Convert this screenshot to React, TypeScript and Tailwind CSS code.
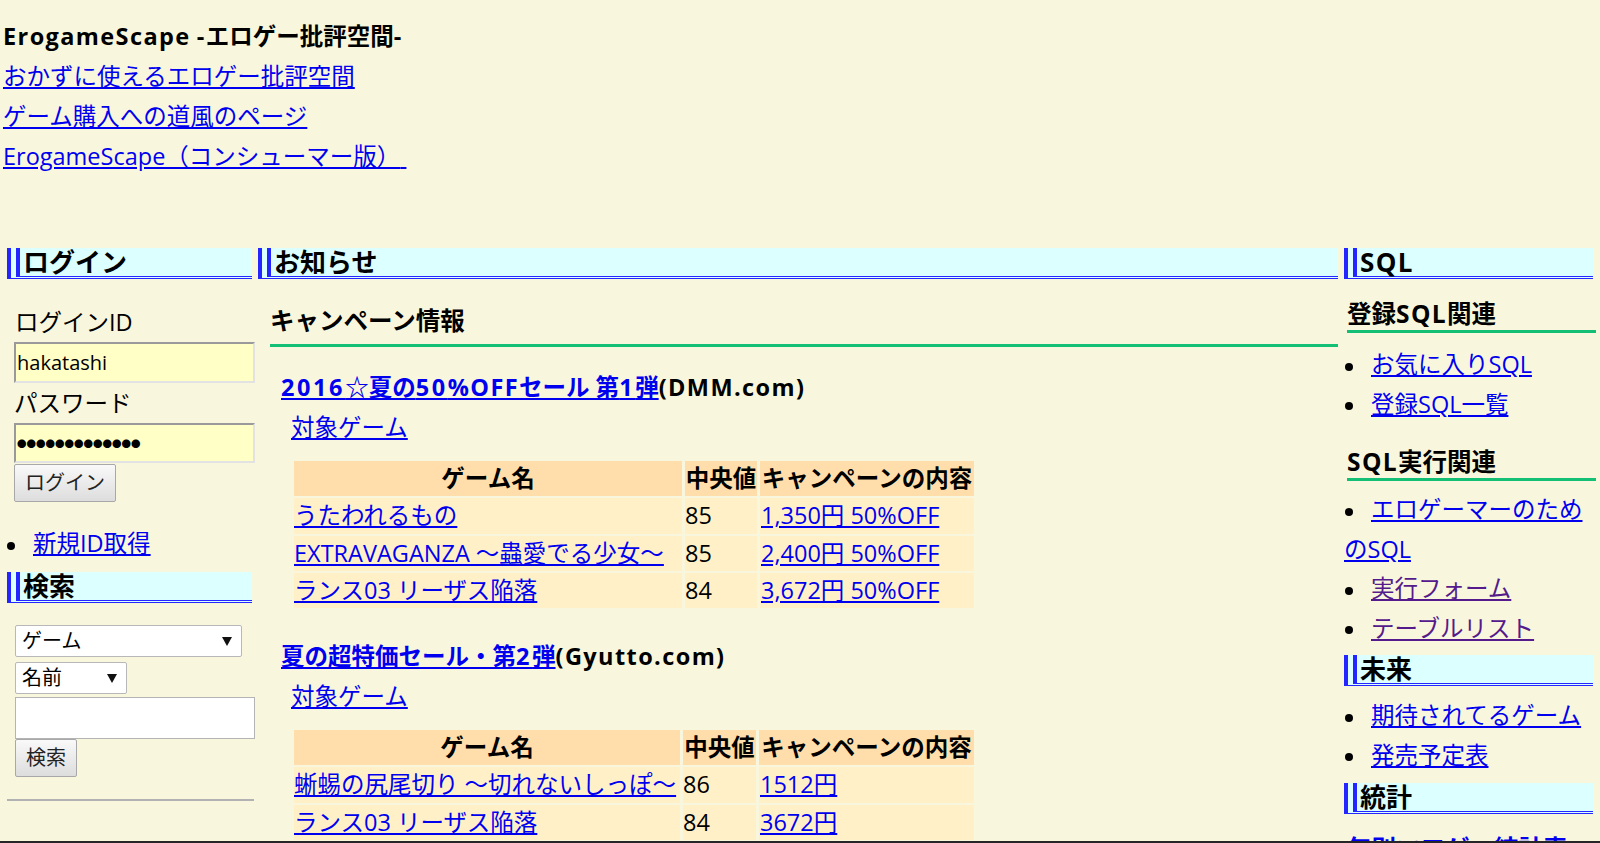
import React from "react";

type Row = { name: string; score: string; deal: string };

interface Campaign {
  title: string;
  shop: string;
  rows: Row[];
  widths: [string, string, string];
}

const campaigns: Campaign[] = [
  {
    title: "2016☆夏の50%OFFセール 第1弾",
    shop: "(DMM.com)",
    rows: [
      { name: "うたわれるもの", score: "85", deal: "1,350円 50%OFF" },
      { name: "EXTRAVAGANZA ～蟲愛でる少女～", score: "85", deal: "2,400円 50%OFF" },
      { name: "ランス03 リーザス陥落", score: "84", deal: "3,672円 50%OFF" },
    ],
    widths: ["w-[388px]", "w-[72px]", "w-[214px]"],
  },
  {
    title: "夏の超特価セール・第2弾",
    shop: "(Gyutto.com)",
    rows: [
      { name: "蜥蜴の尻尾切り ～切れないしっぽ～", score: "86", deal: "1512円" },
      { name: "ランス03 リーザス陥落", score: "84", deal: "3672円" },
    ],
    widths: ["w-[386px]", "w-[73px]", "w-[215px]"],
  },
];

const link = "text-[#0000ee] underline";
const visited = "text-[#551a8b] underline";

// bold latin in the original font runs wider than Open Sans, so space those runs out a bit
const Wide = ({ text }: { text: string }) => (
  <>
    {text.split(/([0-9]+|[!-\/:-~]+)/).map((part, i) =>
      i % 2 ? (
        <span key={i} className={/^[0-9]/.test(part) ? "tracking-[2.6px]" : "tracking-[1.4px]"}>
          {part}
        </span>
      ) : (
        part
      )
    )}
  </>
);

// section heading with the blue double bars
const Heading = ({ children, className = "" }: { children: React.ReactNode; className?: string }) => (
  <h2
    className={`h-[31px] bg-[#dcffff] border-l-[13px] border-b-[3px] border-double border-[#2525ff] pl-[3px] text-[26px] font-bold leading-[28px] ${className}`}
  >
    {children}
  </h2>
);

const Dot = ({ className = "" }: { className?: string }) => (
  <span className={`inline-block w-[8px] h-[8px] rounded-full bg-black align-middle mr-[18px] ${className}`} />
);

const Arrow = () => (
  <svg width="10" height="9" viewBox="0 0 10 9">
    <polygon points="0,0 10,0 5,9" fill="#111" />
  </svg>
);

const SubHeading = ({ children, className = "" }: { children: React.ReactNode; className?: string }) => (
  <h3 className={`text-[24.5px] font-bold border-b-[3px] border-[#12bf75] ${className}`}>{children}</h3>
);

const CampaignBlock = ({ c, className = "" }: { c: Campaign; className?: string }) => (
  <div className={`ml-[23px] ${className}`}>
    <div className="font-bold leading-[40px] whitespace-nowrap">
      <a href="#" className={link}>
        <Wide text={c.title} />
      </a>
      <Wide text={c.shop} />
    </div>
    <div className="ml-[10px] leading-[40px]">
      <a href="#" className={link}>
        対象ゲーム
      </a>
    </div>
    <table className="mt-[12px] ml-[10px] border-separate border-spacing-x-[3px] border-spacing-y-[2px] whitespace-nowrap">
      <thead>
        <tr>
          <th className={`${c.widths[0]} h-[35px] p-0 bg-[#ffdeab] font-bold text-center`}>ゲーム名</th>
          <th className={`${c.widths[1]} h-[35px] p-0 bg-[#ffdeab] font-bold text-center`}>中央値</th>
          <th className={`${c.widths[2]} h-[35px] p-0 bg-[#ffdeab] font-bold text-center`}>キャンペーンの内容</th>
        </tr>
      </thead>
      <tbody>
        {c.rows.map((r) => (
          <tr key={r.name}>
            <td className="h-[35px] p-0 bg-[#fff0c8]">
              <a href="#" className={link}>
                {r.name}
              </a>
            </td>
            <td className="h-[35px] p-0 bg-[#fff0c8]">{r.score}</td>
            <td className="h-[35px] p-0 pl-[1px] bg-[#fff0c8]">
              <a href="#" className={link}>
                {r.deal}
              </a>
            </td>
          </tr>
        ))}
      </tbody>
    </table>
  </div>
);

export default function App() {
  return (
    <div className="h-[843px] flex flex-col bg-[#f8f7dd] text-black text-[23.5px] font-['Open_Sans','Noto_Sans_CJK_JP',sans-serif]">
      <div className="flex-1 min-h-0 overflow-hidden">
        {/* top links */}
        <div className="pt-[16px] pl-[3px] leading-[40px]">
          <div className="font-bold">
            <Wide text="ErogameScape -エロゲー批評空間-" />
          </div>
          <div>
            <a href="#" className={link}>
              おかずに使えるエロゲー批評空間
            </a>
          </div>
          <div>
            <a href="#" className={link}>
              ゲーム購入への道風のページ
            </a>
          </div>
          <div>
            <a href="#" className={link}>
              ErogameScape（コンシューマー版）{"\u00a0"}
            </a>
          </div>
        </div>

        <div className="mt-[72px] flex items-start gap-[6px] px-[7px]">
          {/* left column */}
          <div className="w-[245px] shrink-0">
            <Heading>ログイン</Heading>
            <div className="mt-[23px] pl-[7px]">
              <div className="leading-[40px] pl-[1px]">ログインID</div>
              <input
                readOnly
                defaultValue="hakatashi"
                className="block w-[241px] h-[41px] bg-[#ffffc6] border-2 border-t-[#9a9a9a] border-l-[#9a9a9a] border-r-[#e2e2e2] border-b-[#e2e2e2] px-[1px] text-[20px] outline-none"
              />
              <div className="leading-[40px]">パスワード</div>
              <input
                readOnly
                defaultValue="●●●●●●●●●●●●●"
                className="block w-[241px] h-[40px] bg-[#ffffc6] border-2 border-t-[#9a9a9a] border-l-[#9a9a9a] border-r-[#e2e2e2] border-b-[#e2e2e2] px-[1px] text-[9.5px] outline-none"
              />
              <button className="block mt-[1px] w-[102px] h-[38px] bg-linear-to-b from-[#f9f9f9] to-[#dddddd] border border-[#a8a8a8] rounded-[2px] text-[20px] text-[#222]">
                ログイン
              </button>
            </div>
            <ul className="mt-[21px] leading-[40px]">
              <li>
                <Dot />
                <a href="#" className={link}>
                  新規ID取得
                </a>
              </li>
            </ul>
            <Heading className="mt-[9px]">検索</Heading>
            <div className="mt-[22px] pl-[8px] text-[20px]">
              <div className="flex items-center justify-between w-[227px] h-[32px] bg-white border border-[#b8b8b8] rounded-[2px] pl-[6px] pr-[9px]">
                <span>ゲーム</span>
                <Arrow />
              </div>
              <div className="mt-[5px] flex items-center justify-between w-[112px] h-[32px] bg-white border border-[#b8b8b8] rounded-[2px] pl-[6px] pr-[9px]">
                <span>名前</span>
                <Arrow />
              </div>
              <input
                readOnly
                className="block mt-[3px] w-[240px] h-[42px] bg-white border border-[#b4b4b4] outline-none"
              />
              <button className="block w-[62px] h-[38px] bg-linear-to-b from-[#f9f9f9] to-[#dddddd] border border-[#a8a8a8] rounded-[2px] text-[20px] text-[#222]">
                検索
              </button>
            </div>
            <hr className="mt-[22px] w-[247px] border-0 border-t-2 border-[#b2b2b2]" />
          </div>

          {/* middle column */}
          <div className="flex-1 min-w-0">
            <Heading>お知らせ</Heading>
            <SubHeading className="mt-[22px] ml-[12px] leading-[40px] pb-[3px]">キャンペーン情報</SubHeading>
            <CampaignBlock c={campaigns[0]} className="mt-[20px]" />
            <CampaignBlock c={campaigns[1]} className="mt-[26px]" />
          </div>

          {/* right column */}
          <div className="w-[249px] shrink-0 leading-[39.5px]">
            <Heading>
              <Wide text="SQL" />
            </Heading>
            <SubHeading className="mt-[19px] ml-[3px] -mr-[3px] leading-[32px]">
              <Wide text="登録SQL関連" />
            </SubHeading>
            <ul className="mt-[12px]">
              <li>
                <Dot className="ml-[1px] mr-[17px]" />
                <a href="#" className={link}>
                  お気に入りSQL
                </a>
              </li>
              <li>
                <Dot className="ml-[1px] mr-[17px]" />
                <a href="#" className={link}>
                  登録SQL一覧
                </a>
              </li>
            </ul>
            <SubHeading className="mt-[22px] ml-[3px] -mr-[3px] leading-[32px]">
              <Wide text="SQL実行関連" />
            </SubHeading>
            <ul className="mt-[9px]">
              <li>
                <Dot className="ml-[1px] mr-[17px]" />
                <a href="#" className={link}>
                  エロゲーマーのためのSQL
                </a>
              </li>
              <li>
                <Dot className="ml-[1px] mr-[17px]" />
                <a href="#" className={visited}>
                  実行フォーム
                </a>
              </li>
              <li>
                <Dot className="ml-[1px] mr-[17px]" />
                <a href="#" className={visited}>
                  テーブルリスト
                </a>
              </li>
            </ul>
            <Heading className="mt-[7px]">未来</Heading>
            <ul className="mt-[10px]">
              <li>
                <Dot className="ml-[1px] mr-[17px]" />
                <a href="#" className={link}>
                  期待されてるゲーム
                </a>
              </li>
              <li>
                <Dot className="ml-[1px] mr-[17px]" />
                <a href="#" className={link}>
                  発売予定表
                </a>
              </li>
            </ul>
            <Heading className="mt-[8px]">統計</Heading>
            <SubHeading className="mt-[19px] ml-[3px] -mr-[3px] leading-[32px] border-transparent">
              <a href="#" className={link}>
                年別エロゲー統計表
              </a>
            </SubHeading>
          </div>
        </div>
      </div>
      <div className="h-[2px] bg-[#262626]" />
    </div>
  );
}
